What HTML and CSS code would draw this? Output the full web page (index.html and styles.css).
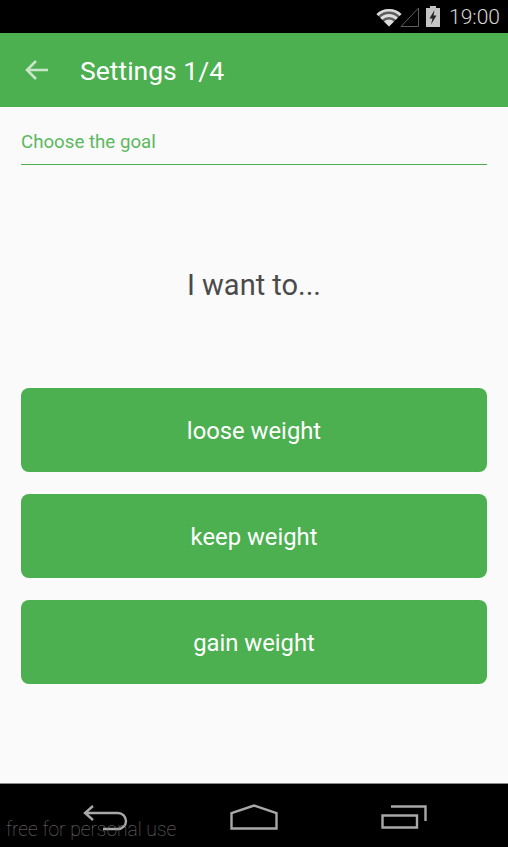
FILE: index.html
```html
<!DOCTYPE html>
<html lang="en">
	<head>
		<meta charset="UTF-8" />
		<meta name="viewport" content="width=device-width, initial-scale=1.0" />
		<title>Settings 1/4</title>
		<link rel="stylesheet" href="styles.css">
	</head>
	<body>
		<div class="screen">
			<div class="status-bar">
				<svg class="icon-wifi" width="26" height="20" viewBox="0 0 26 19">
					<path d="M0.5 6.5 A18 18 0 0 1 25.5 6.5 L13 19 Z" fill="#5e5e5e" />
					<path d="M0.5 6.5 A18 18 0 0 1 25.5 6.5 L23.6 8.4 A15 15 0 0 0 2.4 8.4 Z" fill="#dcdcdc" />
					<path d="M4.2 10.2 A12.6 12.6 0 0 1 21.8 10.2 L19.8 12.2 A10 10 0 0 0 6.2 12.2 Z" fill="#dcdcdc" />
					<path d="M8 14 A7.2 7.2 0 0 1 18 14 L13 19 Z" fill="#dcdcdc" />
				</svg>
				<svg class="icon-signal" width="19" height="20" viewBox="0 0 19 20">
					<path d="M1 19.5 H18.5 V1 Z" fill="none" stroke="#5e5e5e" stroke-width="1" />
				</svg>
				<svg class="icon-battery" width="14" height="21" viewBox="0 0 14 21">
					<path d="M4 0 H10 V2 H14 V21 H0 V2 H4 Z" fill="#c4c4c4" />
					<path d="M8.5 4 L3.5 12.5 H6.5 L5 18.5 L10.5 9.5 H7.5 Z" fill="#222" />
				</svg>
				<span class="clock">19:00</span>
			</div>
			<div class="app-bar">
				<svg class="back-arrow" width="24" height="20" viewBox="0 0 24 20">
					<path d="M23 10 H2 M11 1 L2 10 L11 19" fill="none" stroke="#c9e6ca" stroke-width="2.6" />
				</svg>
				<h1 class="app-title">Settings 1/4</h1>
			</div>
			<div class="content">
				<div class="step-title">Choose the goal</div>
				<div class="question">I want to...</div>
				<div class="choices">
					<div class="choice">loose weight</div>
					<div class="choice">keep weight</div>
					<div class="choice">gain weight</div>
				</div>
			</div>
			<div class="nav-bar">
				<svg class="nav-back" width="46" height="26" viewBox="0 0 46 26">
					<path d="M10 1 L2 8 L10 15 M2 8 H35 A8 8 0 0 1 35 24 H20" fill="none" stroke="#a8a8a8" stroke-width="2.4" />
				</svg>
				<svg class="nav-home" width="48" height="26" viewBox="0 0 48 26">
					<path d="M1.5 24.5 V9 L24 1.5 L46.5 9 V24.5 Z" fill="none" stroke="#a8a8a8" stroke-width="2.4" />
				</svg>
				<svg class="nav-recent" width="46" height="24" viewBox="0 0 46 24">
					<path d="M1.5 10.5 H36 V22.5 H1.5 Z M10 1.5 H44.5 V16" fill="none" stroke="#a8a8a8" stroke-width="2.4" />
				</svg>
				<span class="watermark">free for personal use</span>
			</div>
		</div>
	</body>
</html>
```

FILE: styles.css
```css
html, body {
	margin: 0;
	padding: 0;
}
body {
	background: #000;
	font-family: Roboto, "Liberation Sans", sans-serif;
}
.screen {
	width: 508px;
	height: 847px;
	display: flex;
	flex-direction: column;
	overflow: hidden;
}
.status-bar {
	height: 33px;
	background: #000;
	display: flex;
	align-items: center;
	padding-right: 8px;
	box-sizing: border-box;
	justify-content: flex-end;
}
.icon-signal {
	margin-left: -2px;
}
.icon-battery {
	margin-left: 7px;
}
.clock {
	margin-left: 9px;
	font-size: 21px;
	font-weight: 300;
	color: #d8d8d8;
}
.app-bar {
	height: 74px;
	background: #4caf50;
	display: flex;
	align-items: center;
	padding-left: 25px;
	box-sizing: border-box;
}
.back-arrow {
	margin-right: 31px;
}
.app-title {
	margin: 0;
	font-size: 26.5px;
	line-height: 36px;
	padding-top: 2px;
	font-weight: 400;
	color: #fff;
}
.content {
	flex: 1;
	background: #fafafa;
	padding: 0 21px;
}
.step-title {
	height: 58px;
	line-height: 70px;
	box-sizing: border-box;
	font-size: 18.7px;
	color: #5cb860;
	border-bottom: 1px solid #4caf50;
}
.question {
	margin-top: 102px;
	text-align: center;
	font-size: 29px;
	line-height: 36px;
	font-weight: 400;
	color: #4a4a4a;
}
.choices {
	margin-top: 85px;
	display: flex;
	flex-direction: column;
	gap: 22px;
}
.choice {
	height: 84px;
	line-height: 86px;
	background: #4caf50;
	border-radius: 8px;
	text-align: center;
	font-size: 23.8px;
	color: #fff;
}
.nav-bar {
	position: relative;
	height: 64px;
	background: #000;
	border-top: 1px solid #8a8a8a;
	box-sizing: border-box;
}
.nav-back,
.nav-home,
.nav-recent {
	position: absolute;
}
.nav-back {
	left: 83px;
	top: 21px;
}
.nav-home {
	left: 230px;
	top: 20px;
}
.nav-recent {
	left: 381px;
	top: 21px;
}
.watermark {
	position: absolute;
	left: 6px;
	top: 34px;
	font-size: 19.3px;
	font-weight: 100;
	color: #7a7a7a;
}
```
